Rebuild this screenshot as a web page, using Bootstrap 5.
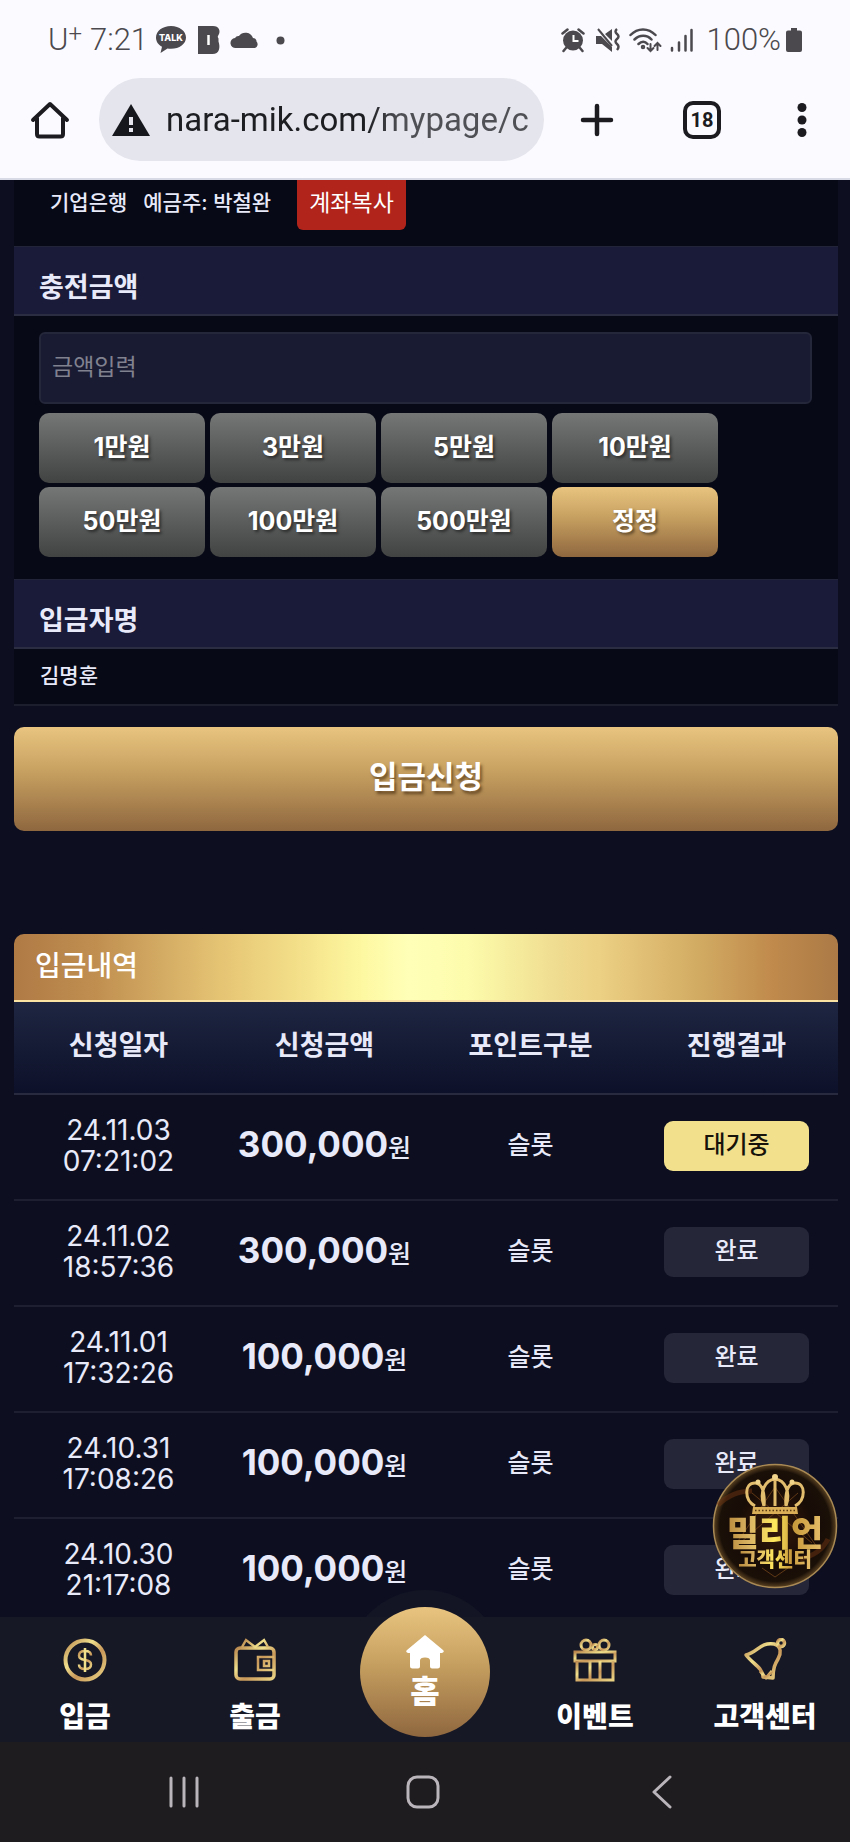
<!DOCTYPE html>
<html lang="ko">
<head>
<meta charset="utf-8">
<meta name="viewport" content="width=device-width, initial-scale=1">
<title>입금신청</title>
<link href="https://cdn.jsdelivr.net/npm/bootstrap@5.3.0/dist/css/bootstrap.min.css" rel="stylesheet">
<style>
  :root { --gold: linear-gradient(#e8c480, #c9a362 40%, #8f673f); }
  body { background: #0d0f21; color: #e8eafa; font-family: Inter, "Noto Sans CJK KR", sans-serif; padding-bottom: 216px; }
  button, input, a { font-family: inherit; }

  /* phone chrome */
  .browser-top { background: #fbfaff; border-bottom: 2px solid #d8dae6; height: 180px; color: #4b494d; }
  .status { height: 78px; padding: 2px 47px 0 48px; font: 300 31px/40px Roboto, sans-serif; }
  .status sup { font-size: 24px; top: -8px; }
  .icon-btn { background: none; border: 0; padding: 0; color: #1b1b20; flex-shrink: 0; }
  .w-home { width: 99px; } .w-tool { width: 105px; } .w-menu { width: 96px; }
  .url-pill { background: #e4e5ed; height: 83px; border-radius: 42px; padding: 0 16px 0 13px; color: #17181d; min-width: 0; }
  .url-pill input { font: 400 33px/44px Roboto, sans-serif; color: #1d1e22; padding: 0; margin-left: 16px; min-width: 0;
    -webkit-mask-image: linear-gradient(90deg, #000 55%, rgba(0,0,0,.75) 65%); mask-image: linear-gradient(90deg, #000 55%, rgba(0,0,0,.75) 65%); }

  /* deposit form */
  .page { padding: 0 12px 0 14px; }
  .panel { background: #070916; border-bottom: 2px solid #1c1e2e; }
  .account { height: 66px; padding-left: 36px; font-size: 21px; line-height: 46px; font-weight: 500; }
  .btn-copy { background: #b0241b; color: #fff; font-size: 23px; height: 50px; line-height: 46px; padding: 0 12px 4px; border: 0; border-radius: 0 0 6px 6px; margin-left: 26px; }
  .head-bar { background: #191b38; border-top: 1px solid #22243a; border-bottom: 2px solid #2b2d42; height: 70px; padding: 7px 25px 0; font-size: 27px; line-height: 68px; font-weight: 700; margin: 0; }
  .form-zone { padding: 16px 26px 22px 25px; }
  .amount { background: #191b33; border: 2px solid #242639; border-radius: 6px; height: 72px; padding: 0 11px 2px; color: #fff; font-size: 23px; }
  .amount:focus { background: #191b33; color: #fff; }
  .amount::placeholder { color: #81828f; }
  .chips { display: grid; grid-template-columns: repeat(4, minmax(0, 166px)); gap: 4px 5px; margin-top: 9px; }
  .chip { height: 70px; border: 0; border-radius: 10px; background: linear-gradient(#757776, #414342); color: #fff; font-size: 25px; font-weight: 700; padding: 0; text-shadow: 2px 2px 3px rgba(0,0,0,.5); }
  .gold { background: var(--gold); }
  .payer { height: 55px; padding: 0 26px; font-size: 21px; line-height: 53px; font-weight: 500; }
  .btn-submit { background: var(--gold); color: #fff; border: 0; border-radius: 10px; height: 104px; font-size: 31px; font-weight: 700; padding: 0 0 3px; text-shadow: 2px 3px 3px rgba(60,35,10,.6); margin-top: 21px; }

  /* history */
  .history-title { margin: 103px 0 0; height: 68px; padding: 0 21px; border-radius: 10px 10px 0 0; border-bottom: 2px solid #fbe3a4; font-size: 28px; line-height: 65px; font-weight: 500; color: #fff;
    background: linear-gradient(90deg, #b07a45, #c08f50 10%, #e5c474 25%, #f3de88 34%, #fdf8a0 42%, #ffffb8 48%, #fdfcac 55%, #efdc90 66%, #ecd083 71%, #d0a860 84%, #c08a4c 92%, #ab7a46); }
  .history { table-layout: fixed; width: 100%; text-align: center; }
  .history thead { background: linear-gradient(#1e2641, #0d1029); }
  .history th { height: 92px; padding: 0 0 2px 3px; font-size: 27px; font-weight: 700; border-bottom: 2px solid #282b40; }
  .history td { height: 106px; padding: 0 0 3px 3px; border-bottom: 2px solid #1e2031; font-size: 25px; font-weight: 500; }
  .history .when { font-size: 28px; line-height: 31px; font-weight: 400; }
  .history .sum { font-size: 25px; white-space: nowrap; padding-bottom: 6px; }
  .history .sum b { font-size: 35px; font-weight: 700; }
  .state { display: block; width: 145px; height: 50px; margin: 0 auto; border-radius: 9px; background: #252638; font-size: 24px; line-height: 48px; }
  .state.wait { background: #f2e08c; color: #17120a; }

  /* bottom bars */
  .tabs { background: #171826; height: 125px; }
  .tabs a { color: #fff; text-decoration: none; font-size: 28px; font-weight: 800; line-height: 40px; width: 20%; padding-top: 21px; }
  .tabs a svg { margin-bottom: 15px; }
  .tabs .home-tab { padding: 0; }
  .home-halo { position: absolute; top: -27px; left: 50%; width: 156px; height: 156px; margin-left: -78px; border-radius: 50%; background: #131524; clip-path: inset(0 0 129px 0); }
  .home-disc { position: relative; width: 130px; height: 130px; margin-top: -10px; border-radius: 50%; background: var(--gold); padding-top: 27px; font-size: 32px; line-height: 40px; }
  .tabs .home-disc svg { margin-bottom: 2px; }
  .sysbar { background: #1f1c1f; height: 100px; padding: 0 69px 0 64px; }
  .sysbar button { flex: 1; color: #bab5ba; }
  .support { position: fixed; right: 12px; bottom: 253px; z-index: 1031; }
</style>
</head>
<body>
<svg width="0" height="0" class="position-absolute" aria-hidden="true">
  <defs>
    <linearGradient id="goldLine" x1="0" y1="0" x2="1" y2="1"><stop offset="0" stop-color="#b9874e"/><stop offset=".35" stop-color="#f0e08c"/><stop offset=".6" stop-color="#c9985a"/><stop offset="1" stop-color="#e9d383"/></linearGradient>
    <linearGradient id="goldText" x1="0" y1="0" x2="1" y2="0"><stop offset="0" stop-color="#b8893c"/><stop offset=".25" stop-color="#dcb765"/><stop offset=".5" stop-color="#ffe95c"/><stop offset=".7" stop-color="#c99b3c"/><stop offset="1" stop-color="#e6bf6a"/></linearGradient>
    <radialGradient id="disc"><stop offset="0" stop-color="#3a1c0b"/><stop offset=".6" stop-color="#180c06"/><stop offset=".9" stop-color="#1a1008"/><stop offset="1" stop-color="#5c4322"/></radialGradient>
  </defs>
</svg>

<header class="browser-top">
  <div class="status d-flex align-items-center justify-content-between">
    <div class="d-flex align-items-center">
      <span>U<sup>+</sup></span><span class="ms-2">7:21</span>
      <svg class="ms-1" width="34" height="30" viewBox="0 0 34 30"><path fill="#4b494d" d="M19 1C10.500 1 4 6 4 12.500c0 4 2.300 7.300 6 9.300L8.500 28l7-4.500c1 .2 2.300.3 3.500.3 8.500 0 15-5 15-11.300S27.500 1 19 1z"/><text x="19" y="16" font-family="Inter, sans-serif" font-weight="800" font-size="9" fill="#fff" text-anchor="middle">TALK</text></svg>
      <svg class="ms-2 me-1" width="28" height="30" viewBox="0 0 28 30"><path fill="#4b494d" d="M4 1h15c6 0 8 5 5.500 9 -1 1.500-1 2 0 3.500v3c2 6 1 12.500-6 12.500H4z"/><path stroke="#fff" stroke-width="2.500" d="M14.500 10v10"/></svg>
      <svg class="ms-1" width="30" height="20" viewBox="0 0 30 20"><path fill="#4b494d" d="M6 18a5 5 0 0 1-1-10 4 4 0 0 1 4-2 8 8 0 0 1 14 2c3 .5 3.500 2 3.500 3.500A4 4 0 0 1 25 18z"/></svg>
      <svg class="ms-3" width="9" height="9" viewBox="0 0 9 9"><circle cx="4.500" cy="4.500" r="4" fill="#4b494d"/></svg>
    </div>
    <div class="d-flex align-items-center">
      <svg width="24" height="26" viewBox="0 0 24 26"><circle cx="12" cy="13.500" r="10" fill="#4b494d"/><path d="M1.500 6.500l5-4M22.500 6.500l-5-4M5 21l-2.500 3M19 21l2.500 3" stroke="#4b494d" stroke-width="2.500" stroke-linecap="round"/><path d="M12.500 8v6h5" stroke="#fff" stroke-width="2" fill="none"/></svg>
      <svg class="ms-2" width="28" height="26" viewBox="-3 0 28 26"><path fill="#4b494d" d="M0 9h5l11 11v5L6 17H0zM16 2v12l-7-7z"/><path d="M2 2l14 17" stroke="#4b494d" stroke-width="2"/><path d="M21 2q-3 2.500 0 5t0 5 0 5 0 6" stroke="#4b494d" stroke-width="2.500" fill="none"/></svg>
      <svg class="ms-2" width="33" height="26" viewBox="0 0 33 26" fill="none" stroke="#4b494d" stroke-width="2.500" stroke-linecap="round"><path d="M1.500 8c7-7.500 18-7.500 25 0M5.500 12.500c5-5 12.500-5 17 0M9.500 17c3-3 6.500-3 9 0"/><circle cx="14" cy="20" r="1" /><path stroke-width="2" d="M21.500 17v7m-3-3l3 3 3-3M28.500 23v-7m-3 3l3-3 3 3"/></svg>
      <svg class="ms-2" width="24" height="26" viewBox="0 0 24 26" stroke="#4b494d" stroke-width="2.500" stroke-linecap="round"><path d="M2 21v2.500M9 15.500v8M15.500 9v14.500M21.500 3v20.500"/></svg>
      <span class="ms-2 ps-1">100%</span>
      <svg class="ms-1" width="18" height="26" viewBox="0 0 18 26"><path fill="#4b494d" d="M6 1h6v2.500h3a2 2 0 0 1 2 2V23a2 2 0 0 1-2 2H3a2 2 0 0 1-2-2V5.500a2 2 0 0 1 2-2h3z"/></svg>
    </div>
  </div>
  <div class="d-flex align-items-center">
    <button class="icon-btn w-home" aria-label="홈페이지"><svg width="40" height="40" viewBox="0 0 40 40" fill="none" stroke="currentColor" stroke-width="4" stroke-linejoin="round" stroke-linecap="round"><path d="M3 20L20 4l17 16M7 18v16q0 2.500 2.500 2.500h21q2.500 0 2.500-2.500V18"/></svg></button>
    <div class="url-pill d-flex align-items-center flex-fill">
      <svg class="flex-shrink-0" width="38" height="34" viewBox="0 0 38 34"><path fill="currentColor" d="M19 1l19 32H0z"/><path stroke="#e4e5ed" stroke-width="4" d="M19 14v8M19 25v4"/></svg>
      <input class="form-control-plaintext" type="text" value="nara-mik.com/mypage/c" aria-label="주소창">
    </div>
    <button class="icon-btn w-tool" aria-label="새 탭"><svg width="34" height="34" viewBox="0 0 34 34" stroke="currentColor" stroke-width="4.500" stroke-linecap="round"><path d="M17 3v28M3 17h28"/></svg></button>
    <button class="icon-btn w-tool" aria-label="탭 18개"><svg width="38" height="38" viewBox="0 0 38 38"><rect x="2" y="2" width="34" height="34" rx="8" fill="none" stroke="currentColor" stroke-width="4"/><text x="19" y="26" font-family="Roboto, sans-serif" font-weight="700" font-size="20" text-anchor="middle" fill="currentColor">18</text></svg></button>
    <button class="icon-btn w-menu" aria-label="메뉴"><svg width="10" height="36" viewBox="0 0 10 36" fill="currentColor"><circle cx="5" cy="5.500" r="4.500"/><circle cx="5" cy="18" r="4.500"/><circle cx="5" cy="30.500" r="4.500"/></svg></button>
  </div>
</header>

<main class="page">
  <form class="panel" id="deposit">
    <div class="account d-flex">
      <span>기업은행</span><span class="ms-3">예금주: 박철완</span>
      <button type="button" class="btn-copy">계좌복사</button>
    </div>
    <h2 class="head-bar"><label for="amount">충전금액</label></h2>
    <div class="form-zone">
      <input class="form-control amount" id="amount" type="text" placeholder="금액입력">
      <div class="chips">
        <button type="button" class="chip">1만원</button>
        <button type="button" class="chip">3만원</button>
        <button type="button" class="chip">5만원</button>
        <button type="button" class="chip">10만원</button>
        <button type="button" class="chip">50만원</button>
        <button type="button" class="chip">100만원</button>
        <button type="button" class="chip">500만원</button>
        <button type="reset" class="chip gold">정정</button>
      </div>
    </div>
    <h2 class="head-bar">입금자명</h2>
    <div class="payer">김명훈</div>
  </form>
  <button type="submit" form="deposit" class="btn-submit w-100">입금신청</button>

  <h2 class="history-title">입금내역</h2>
  <table class="history">
    <thead><tr><th>신청일자</th><th>신청금액</th><th>포인트구분</th><th>진행결과</th></tr></thead>
    <tbody>
      <tr><td class="when">24.11.03<br>07:21:02</td><td class="sum"><b>300,000</b>원</td><td>슬롯</td><td><span class="state wait">대기중</span></td></tr>
      <tr><td class="when">24.11.02<br>18:57:36</td><td class="sum"><b>300,000</b>원</td><td>슬롯</td><td><span class="state">완료</span></td></tr>
      <tr><td class="when">24.11.01<br>17:32:26</td><td class="sum"><b>100,000</b>원</td><td>슬롯</td><td><span class="state">완료</span></td></tr>
      <tr><td class="when">24.10.31<br>17:08:26</td><td class="sum"><b>100,000</b>원</td><td>슬롯</td><td><span class="state">완료</span></td></tr>
      <tr><td class="when">24.10.30<br>21:17:08</td><td class="sum"><b>100,000</b>원</td><td>슬롯</td><td><span class="state">완료</span></td></tr>
    </tbody>
  </table>
</main>

<a class="support" href="#support" aria-label="밀리언 고객센터">
  <svg class="d-block" width="126" height="126" viewBox="0 0 126 126">
    <circle cx="63" cy="63" r="61.500" fill="url(#disc)" stroke="#a98a55" stroke-width="1.500"/>
    <path d="M22 84L63 24l42 60M40 30l60 50M86 30L28 80M50 105l13 9 13-9" stroke="#7c4a1d" stroke-width="1" fill="none" opacity=".7"/>
    <path d="M6 42q14-14 34-14M88 96q20-4 28-20" stroke="#6d3412" stroke-width="5" fill="none" opacity=".5"/>
    <g fill="none" stroke="#e2bd6d" stroke-width="3"><path d="M43 43C32 37 32 20 43 20c8 0 10 12 9 23M52 43c-5-14 1-26 11-27 10 1 16 13 11 27M63 17v26M83 43c11-6 11-23 0-23-8 0-10 12-9 23"/></g>
    <g fill="#f0d48b"><circle cx="63" cy="14" r="3"/><circle cx="46" cy="19" r="2.500"/><circle cx="80" cy="19" r="2.500"/></g>
    <path d="M41 44h44l1 7H40z" fill="#d9ae57"/><path d="M43 47.500h40" stroke="#5b3b12" stroke-width="1.500" stroke-dasharray="1.500 2"/>
    <text x="63" y="83" font-family="Noto Sans CJK KR, sans-serif" font-size="35" font-weight="900" text-anchor="middle" fill="url(#goldText)">밀리언</text>
    <text x="63" y="104" font-family="Noto Sans CJK KR, sans-serif" font-size="20" font-weight="900" text-anchor="middle" fill="url(#goldText)">고객센터</text>
  </svg>
</a>

<footer class="fixed-bottom">
  <nav class="tabs d-flex position-relative">
    <div class="home-halo"></div>
    <a href="#deposit" class="d-flex flex-column align-items-center">
      <svg width="44" height="44" viewBox="0 0 44 44" fill="none" stroke="url(#goldLine)"><circle cx="22" cy="22" r="19.500" stroke-width="4"/><path stroke-width="2.500" d="M28 17.500c0-3-2.500-4.500-6-4.500s-6 1.500-6 4.500 2.500 4 6 4.500 6 1.500 6 4.500-2.500 4.500-6 4.500-6-1.500-6-4.500"/><path stroke="#f0e08c" stroke-width="2.500" d="M22 10v24"/></svg>
      입금</a>
    <a href="#withdraw" class="d-flex flex-column align-items-center">
      <svg width="44" height="44" viewBox="0 0 44 44" fill="none" stroke="url(#goldLine)" stroke-width="3.500"><rect x="3" y="10" width="38" height="31" rx="4"/><path d="M41 19H25v13h16M31 23h5v5h-5zM9 9l4-7 9 7 9-7 4 7" stroke-width="2.500"/></svg>
      출금</a>
    <a href="#home" class="home-tab d-flex justify-content-center">
      <span class="home-disc d-flex flex-column align-items-center">
        <svg width="38" height="36" viewBox="0 0 38 36"><path fill="#fff" d="M19 1L37 16q2 2-1 3h-2v13q0 2.500-2.500 2.500H26q-2 0-2-2v-6q0-3-5-3t-5 3v6q0 2-2 2H6.500Q4 34.500 4 32V19H2q-3-1-1-3z"/></svg>
        홈</span></a>
    <a href="#event" class="d-flex flex-column align-items-center">
      <svg width="44" height="44" viewBox="0 0 44 44" fill="none" stroke="url(#goldLine)" stroke-width="3"><rect x="2" y="14" width="40" height="9"/><path d="M4 23v19h36V23M17 23v19M27 23v19" stroke-width="3"/><circle cx="13" cy="7" r="5"/><circle cx="31" cy="7" r="5"/><circle cx="22" cy="9" r="2.500"/></svg>
      이벤트</a>
    <a href="#support" class="d-flex flex-column align-items-center">
      <svg width="44" height="44" viewBox="0 0 44 44" fill="none" stroke="url(#goldLine)" stroke-width="3.500" stroke-linejoin="round"><path d="M3 17c12-3 14-13 28-11 8 2 7 10 4 15-3 5-5 9-5 19l-10-1c0-9-10-13-17-22z"/><circle cx="38" cy="5" r="3.500"/><path d="M17 33l6 7 6-7" stroke-width="3"/></svg>
      고객센터</a>
  </nav>
  <div class="sysbar d-flex align-items-center">
    <button class="icon-btn" aria-label="최근 앱"><svg width="32" height="34" viewBox="0 0 32 34" stroke="currentColor" stroke-width="3" stroke-linecap="round"><path d="M3 3v28M16 3v28M29 3v28"/></svg></button>
    <button class="icon-btn" aria-label="홈"><svg width="34" height="34" viewBox="0 0 34 34"><rect x="2" y="2" width="30" height="30" rx="9" fill="none" stroke="currentColor" stroke-width="3"/></svg></button>
    <button class="icon-btn" aria-label="뒤로"><svg width="20" height="34" viewBox="0 0 20 34" fill="none" stroke="currentColor" stroke-width="3" stroke-linecap="round" stroke-linejoin="round"><path d="M18 2L2 17l16 15"/></svg></button>
  </div>
</footer>
<script src="https://cdn.jsdelivr.net/npm/bootstrap@5.3.0/dist/js/bootstrap.bundle.min.js"></script>
</body>
</html>
